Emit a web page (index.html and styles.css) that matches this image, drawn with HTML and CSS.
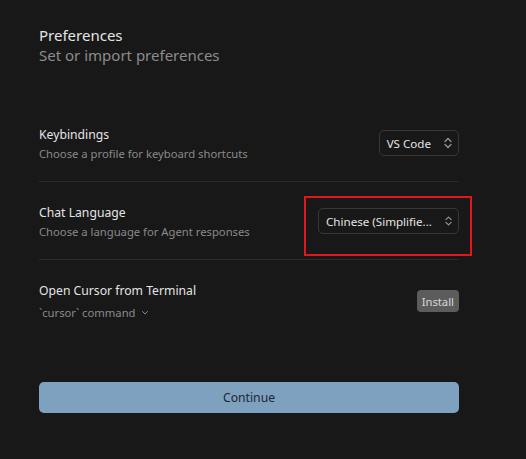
FILE: index.html
```html
<!DOCTYPE html>
<html>
<head>
    <title>Preferences</title>
    <link rel="stylesheet" href="styles.css">
</head>
<body>
    <div class="page">
        <div class="header">
            <h1>Preferences</h1>
            <p>Set or import preferences</p>
        </div>

        <div class="settings">
            <div class="row">
                <div class="info">
                    <div class="label">Keybindings</div>
                    <div class="desc">Choose a profile for keyboard shortcuts</div>
                </div>
                <div class="select">
                    <span>VS Code</span>
                    <svg class="updown" width="8" height="12" viewBox="0 0 8 12"><path d="M1 4.5 L4 1.5 L7 4.5 M1 7.5 L4 10.5 L7 7.5" fill="none" stroke="currentColor" stroke-width="1.2" stroke-linecap="round" stroke-linejoin="round"/></svg>
                </div>
            </div>
            <div class="row">
                <div class="info">
                    <div class="label">Chat Language</div>
                    <div class="desc">Choose a language for Agent responses</div>
                </div>
                <div class="select wide">
                    <span>Chinese (Simplifie...</span>
                    <svg class="updown" width="8" height="12" viewBox="0 0 8 12"><path d="M1 4.5 L4 1.5 L7 4.5 M1 7.5 L4 10.5 L7 7.5" fill="none" stroke="currentColor" stroke-width="1.2" stroke-linecap="round" stroke-linejoin="round"/></svg>
                </div>
                <div class="highlight"></div>
            </div>
            <div class="row last">
                <div class="info">
                    <div class="label">Open Cursor from Terminal</div>
                    <div class="desc cmd">`cursor` command
                        <svg width="8" height="6" viewBox="0 0 8 6"><path d="M1.5 1.5 L4 4 L6.5 1.5" fill="none" stroke="currentColor" stroke-width="1" stroke-linecap="round" stroke-linejoin="round"/></svg>
                    </div>
                </div>
                <button class="install">Install</button>
            </div>
        </div>

        <button class="continue">Continue</button>
    </div>
</body>
</html>
```

FILE: styles.css
```css
body {
    margin: 0;
    background-color: #181818;
    font-family: "Noto Sans", sans-serif;
    color: #e4e4e4;
}
.page {
    width: 420px;
    padding: 25px 0 0 39px;
}
.header h1 {
    margin: 0;
    font-size: 15px;
    font-weight: normal;
    line-height: 20px;
}
.header p {
    margin: 0;
    font-size: 15px;
    line-height: 20px;
    color: #8c8c8c;
}
.settings {
    margin-top: 39px;
}
.row {
    position: relative;
    display: flex;
    align-items: center;
    justify-content: space-between;
    padding: 22px 0 18px;
    border-bottom: 1px solid #2b2b2b;
}
.row.last {
    border-bottom: none;
}
.label {
    font-size: 12.2px;
    line-height: 18px;
}
.desc {
    margin-top: 1px;
    font-size: 11.25px;
    line-height: 18px;
    color: #8a8a8a;
}
.desc.cmd {
    margin-top: 4px;
    display: flex;
    align-items: center;
    gap: 5px;
}
.select {
    display: flex;
    align-items: center;
    justify-content: space-between;
    gap: 13px;
    height: 24px;
    margin-bottom: 3px;
    padding: 0 6px 0 7px;
    border: 1px solid #383838;
    border-radius: 5px;
    font-size: 11.6px;
    white-space: nowrap;
    color: #e4e4e4;
}
.select.wide {
    width: 126px;
}
.updown {
    color: #9a9a9a;
}
.highlight {
    position: absolute;
    left: 265px;
    top: 14px;
    width: 164px;
    height: 56px;
    border: 2px solid #e3161d;
}
.install {
    background-color: #5c5c5c;
    color: #d8d8d8;
    border: none;
    border-radius: 4px;
    height: 22px;
    margin-bottom: 2px;
    padding: 0 5px;
    font-family: inherit;
    font-size: 11.25px;
}
.continue {
    display: block;
    width: 420px;
    height: 31px;
    margin-top: 42px;
    background-color: #7fa1c0;
    color: #1d2733;
    border: none;
    border-radius: 5px;
    font-family: inherit;
    font-size: 12.2px;
    cursor: pointer;
}
```
